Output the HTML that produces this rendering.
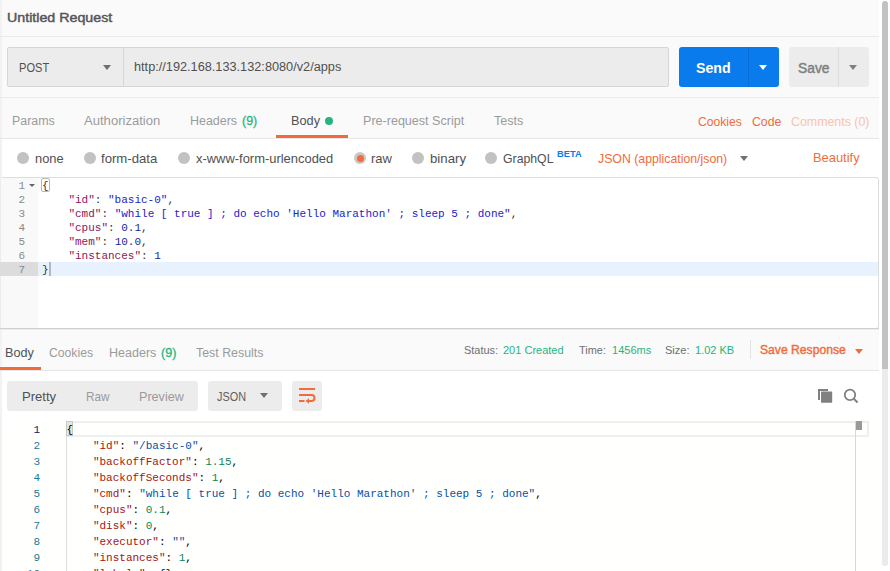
<!DOCTYPE html>
<html><head><meta charset="utf-8"><style>
html,body{margin:0;padding:0;width:890px;height:571px;overflow:hidden;background:#fff;}
#root{position:relative;width:890px;height:571px;overflow:hidden;}
#root>div,#root>svg{position:absolute;}
</style></head><body><div id="root">
<div style="left:0px;top:0px;width:879px;height:571px;background:#fafafa;"></div>
<div style="left:0px;top:0px;width:2px;height:571px;background:#f2f2f2;"></div>
<div id="t0" style="left:7.3px;top:11.00px;font:400 13.3px/13.3px 'Liberation Sans', sans-serif;color:#555555;white-space:pre;transform:scaleX(1.0701);transform-origin:0 0;-webkit-text-stroke:0.45px #555555">Untitled Request</div>
<div style="left:0px;top:36px;width:879px;height:1px;background:#ececec;"></div>
<div style="left:7px;top:47px;width:662px;height:40px;background:#ececec;box-sizing:border-box;border:1px solid #d6d6d6;border-radius:2px"></div>
<div style="left:123px;top:48px;width:1px;height:38px;background:#d6d6d6;"></div>
<div id="t1" style="left:19.3px;top:62.00px;font:400 12.5px/12.5px 'Liberation Sans', sans-serif;color:#505050;white-space:pre;transform:scaleX(0.8870);transform-origin:0 0;">POST</div>
<div style="left:103px;top:65px;width:0;height:0;border-left:4.5px solid transparent;border-right:4.5px solid transparent;border-top:5px solid #707070"></div>
<div id="t2" style="left:133.8px;top:61.00px;font:400 12.5px/12.5px 'Liberation Sans', sans-serif;color:#505050;white-space:pre;transform:scaleX(1.0179);transform-origin:0 0;">http://192.168.133.132:8080/v2/apps</div>
<div style="left:679px;top:47px;width:100px;height:40px;background:#097bed;border-radius:3px"></div>
<div style="left:748px;top:47px;width:1px;height:40px;background:#0a6fd4;"></div>
<div id="t3" style="left:695.9px;top:61.00px;font:700 14px/14px 'Liberation Sans', sans-serif;color:#ffffff;white-space:pre;transform:scaleX(1.0136);transform-origin:0 0;">Send</div>
<div style="left:758.5px;top:65px;width:0;height:0;border-left:4.5px solid transparent;border-right:4.5px solid transparent;border-top:5px solid #ffffff"></div>
<div style="left:789px;top:47px;width:80px;height:40px;background:#ececec;border-radius:3px"></div>
<div style="left:838px;top:47px;width:1px;height:40px;background:#dcdcdc;"></div>
<div id="t4" style="left:797.5px;top:62.00px;font:400 13.8px/13.8px 'Liberation Sans', sans-serif;color:#808080;white-space:pre;transform:scaleX(1.0015);transform-origin:0 0;-webkit-text-stroke:0.45px #808080">Save</div>
<div style="left:849px;top:65px;width:0;height:0;border-left:4.5px solid transparent;border-right:4.5px solid transparent;border-top:5px solid #808080"></div>
<div style="left:0px;top:97px;width:879px;height:1px;background:#ececec;"></div>
<div id="t5" style="left:12.0px;top:115.00px;font:400 12.5px/12.5px 'Liberation Sans', sans-serif;color:#9a9a9a;white-space:pre;transform:scaleX(0.9912);transform-origin:0 0;">Params</div>
<div id="t6" style="left:84.0px;top:115.00px;font:400 12.5px/12.5px 'Liberation Sans', sans-serif;color:#9a9a9a;white-space:pre;transform:scaleX(1.0457);transform-origin:0 0;">Authorization</div>
<div id="t7" style="left:190.0px;top:115.00px;font:400 12.5px/12.5px 'Liberation Sans', sans-serif;color:#9a9a9a;white-space:pre;transform:scaleX(0.9968);transform-origin:0 0;">Headers</div>
<div id="t8" style="left:241.8px;top:115.00px;font:400 12.5px/12.5px 'Liberation Sans', sans-serif;color:#26b47f;white-space:pre;transform:scaleX(0.9947);transform-origin:0 0;-webkit-text-stroke:0.3px #26b47f">(9)</div>
<div id="t9" style="left:291.1px;top:115.00px;font:400 12.5px/12.5px 'Liberation Sans', sans-serif;color:#505050;white-space:pre;transform:scaleX(1.0175);transform-origin:0 0;">Body</div>
<div style="left:325px;top:117px;width:8px;height:8px;border-radius:50%;background:#26b47f"></div>
<div id="t10" style="left:362.6px;top:115.00px;font:400 12.5px/12.5px 'Liberation Sans', sans-serif;color:#9a9a9a;white-space:pre;transform:scaleX(1.0046);transform-origin:0 0;">Pre-request Script</div>
<div id="t11" style="left:493.5px;top:115.00px;font:400 12.5px/12.5px 'Liberation Sans', sans-serif;color:#9a9a9a;white-space:pre;transform:scaleX(1.0039);transform-origin:0 0;">Tests</div>
<div style="left:276px;top:135px;width:72px;height:3px;background:#f26b3a;"></div>
<div id="t12" style="left:698.2px;top:116.00px;font:400 12.5px/12.5px 'Liberation Sans', sans-serif;color:#f26b3a;white-space:pre;transform:scaleX(0.9696);transform-origin:0 0;">Cookies</div>
<div id="t13" style="left:751.5px;top:116.00px;font:400 12.5px/12.5px 'Liberation Sans', sans-serif;color:#f26b3a;white-space:pre;transform:scaleX(0.9802);transform-origin:0 0;">Code</div>
<div id="t14" style="left:790.9px;top:116.00px;font:400 12.5px/12.5px 'Liberation Sans', sans-serif;color:#f8c3ae;white-space:pre;transform:scaleX(0.9901);transform-origin:0 0;">Comments (0)</div>
<div style="left:0px;top:138px;width:879px;height:1px;background:#e6e6e6;"></div>
<div style="left:2px;top:139px;width:877px;height:38px;background:#ffffff;"></div>
<div style="left:17px;top:152px;width:12px;height:12px;border-radius:50%;background:#c2c2c2"></div>
<div id="t15" style="left:34.9px;top:153.00px;font:400 12.7px/12.7px 'Liberation Sans', sans-serif;color:#505050;white-space:pre;transform:scaleX(1.0129);transform-origin:0 0;">none</div>
<div style="left:84px;top:152px;width:12px;height:12px;border-radius:50%;background:#c2c2c2"></div>
<div id="t16" style="left:101.4px;top:153.00px;font:400 12.7px/12.7px 'Liberation Sans', sans-serif;color:#505050;white-space:pre;transform:scaleX(1.0369);transform-origin:0 0;">form-data</div>
<div style="left:178px;top:152px;width:12px;height:12px;border-radius:50%;background:#c2c2c2"></div>
<div id="t17" style="left:195.8px;top:153.00px;font:400 12.7px/12.7px 'Liberation Sans', sans-serif;color:#505050;white-space:pre;transform:scaleX(1.0188);transform-origin:0 0;">x-www-form-urlencoded</div>
<div style="left:354px;top:152px;width:12px;height:12px;border-radius:50%;background:#c8c8c8"></div>
<div style="left:356.5px;top:154.5px;width:7px;height:7px;border-radius:50%;background:#f26b3a"></div>
<div id="t18" style="left:370.9px;top:153.00px;font:400 12.7px/12.7px 'Liberation Sans', sans-serif;color:#505050;white-space:pre;transform:scaleX(1.0267);transform-origin:0 0;">raw</div>
<div style="left:412px;top:152px;width:12px;height:12px;border-radius:50%;background:#c2c2c2"></div>
<div id="t19" style="left:429.8px;top:153.00px;font:400 12.7px/12.7px 'Liberation Sans', sans-serif;color:#505050;white-space:pre;transform:scaleX(1.0416);transform-origin:0 0;">binary</div>
<div style="left:485px;top:152px;width:12px;height:12px;border-radius:50%;background:#c2c2c2"></div>
<div id="t20" style="left:503.4px;top:153.00px;font:400 12.7px/12.7px 'Liberation Sans', sans-serif;color:#505050;white-space:pre;transform:scaleX(0.9677);transform-origin:0 0;">GraphQL</div>
<div id="t21" style="left:557.0px;top:150.00px;font:700 8.7px/8.7px 'Liberation Sans', sans-serif;color:#097bed;white-space:pre;transform:scaleX(1.0688);transform-origin:0 0;">BETA</div>
<div id="t22" style="left:597.5px;top:153.00px;font:400 12.7px/12.7px 'Liberation Sans', sans-serif;color:#f26b3a;white-space:pre;transform:scaleX(0.9694);transform-origin:0 0;">JSON (application/json)</div>
<div style="left:740px;top:156px;width:0;height:0;border-left:4.5px solid transparent;border-right:4.5px solid transparent;border-top:5px solid #707070"></div>
<div id="t23" style="left:812.9px;top:152.00px;font:400 12.7px/12.7px 'Liberation Sans', sans-serif;color:#f26b3a;white-space:pre;transform:scaleX(1.0165);transform-origin:0 0;">Beautify</div>
<div style="left:0px;top:177px;width:879px;height:152px;background:#ffffff;box-sizing:border-box;border:1px solid #dcdcdc;border-radius:3px"></div>
<div style="left:1px;top:178px;width:37px;height:150px;background:#f9f9f9;"></div>
<div style="left:0px;top:178px;width:1px;height:150px;background:#ececec;"></div>
<div style="left:0px;top:262px;width:38px;height:14px;background:#dcdcdc;"></div>
<div style="left:38px;top:262px;width:840px;height:14px;background:#e8f2fe;"></div>
<div style="left:0px;top:328px;width:879px;height:1px;background:#cfcfcf;"></div>
<div style="left:0px;top:329px;width:879px;height:1px;background:#ececec;"></div>
<div id="t24" style="left:0px;top:181.00px;font:400 11px/11px 'Liberation Mono', monospace;color:#8a8a8a;white-space:pre;width:25px;text-align:right">1</div>
<div id="t25" style="left:42px;top:181.00px;font:400 11px/11px 'Liberation Mono', monospace;color:#333333;white-space:pre;"><span style="color:#333333">{</span></div>
<div id="t26" style="left:0px;top:195.00px;font:400 11px/11px 'Liberation Mono', monospace;color:#8a8a8a;white-space:pre;width:25px;text-align:right">2</div>
<div id="t27" style="left:42px;top:195.00px;font:400 11px/11px 'Liberation Mono', monospace;color:#333333;white-space:pre;"><span style="color:#333333">    </span><span style="color:#8a165c">"id"</span><span style="color:#333333">: </span><span style="color:#2222cc">"basic-0"</span><span style="color:#333333">,</span></div>
<div id="t28" style="left:0px;top:209.00px;font:400 11px/11px 'Liberation Mono', monospace;color:#8a8a8a;white-space:pre;width:25px;text-align:right">3</div>
<div id="t29" style="left:42px;top:209.00px;font:400 11px/11px 'Liberation Mono', monospace;color:#333333;white-space:pre;"><span style="color:#333333">    </span><span style="color:#8a165c">"cmd"</span><span style="color:#333333">: </span><span style="color:#2222cc">"while [ true ] ; do echo 'Hello Marathon' ; sleep 5 ; done"</span><span style="color:#333333">,</span></div>
<div id="t30" style="left:0px;top:223.00px;font:400 11px/11px 'Liberation Mono', monospace;color:#8a8a8a;white-space:pre;width:25px;text-align:right">4</div>
<div id="t31" style="left:42px;top:223.00px;font:400 11px/11px 'Liberation Mono', monospace;color:#333333;white-space:pre;"><span style="color:#333333">    </span><span style="color:#8a165c">"cpus"</span><span style="color:#333333">: </span><span style="color:#1b1f9a">0.1</span><span style="color:#333333">,</span></div>
<div id="t32" style="left:0px;top:237.00px;font:400 11px/11px 'Liberation Mono', monospace;color:#8a8a8a;white-space:pre;width:25px;text-align:right">5</div>
<div id="t33" style="left:42px;top:237.00px;font:400 11px/11px 'Liberation Mono', monospace;color:#333333;white-space:pre;"><span style="color:#333333">    </span><span style="color:#8a165c">"mem"</span><span style="color:#333333">: </span><span style="color:#1b1f9a">10.0</span><span style="color:#333333">,</span></div>
<div id="t34" style="left:0px;top:251.00px;font:400 11px/11px 'Liberation Mono', monospace;color:#8a8a8a;white-space:pre;width:25px;text-align:right">6</div>
<div id="t35" style="left:42px;top:251.00px;font:400 11px/11px 'Liberation Mono', monospace;color:#333333;white-space:pre;"><span style="color:#333333">    </span><span style="color:#8a165c">"instances"</span><span style="color:#333333">: </span><span style="color:#1b1f9a">1</span></div>
<div id="t36" style="left:0px;top:265.00px;font:400 11px/11px 'Liberation Mono', monospace;color:#8a8a8a;white-space:pre;width:25px;text-align:right">7</div>
<div id="t37" style="left:42px;top:265.00px;font:400 11px/11px 'Liberation Mono', monospace;color:#333333;white-space:pre;"><span style="color:#333333">}</span></div>
<div style="left:29px;top:183.5px;width:0;height:0;border-left:3.0px solid transparent;border-right:3.0px solid transparent;border-top:3.5px solid #666"></div>
<div style="left:49px;top:262px;width:1.8px;height:14px;background:#b0b8c2;"></div>
<div style="left:41px;top:178px;width:9px;height:14px;background:transparent;box-sizing:border-box;border:1px solid #b8b8b8;border-radius:2px"></div>
<div id="t38" style="left:5.1px;top:347.00px;font:400 12.5px/12.5px 'Liberation Sans', sans-serif;color:#505050;white-space:pre;transform:scaleX(1.0105);transform-origin:0 0;">Body</div>
<div id="t39" style="left:49.3px;top:347.00px;font:400 12.5px/12.5px 'Liberation Sans', sans-serif;color:#9a9a9a;white-space:pre;transform:scaleX(0.9741);transform-origin:0 0;">Cookies</div>
<div id="t40" style="left:108.9px;top:347.00px;font:400 12.5px/12.5px 'Liberation Sans', sans-serif;color:#9a9a9a;white-space:pre;transform:scaleX(1.0011);transform-origin:0 0;">Headers</div>
<div id="t41" style="left:160.6px;top:347.00px;font:400 12.5px/12.5px 'Liberation Sans', sans-serif;color:#26b47f;white-space:pre;transform:scaleX(1.0078);transform-origin:0 0;-webkit-text-stroke:0.3px #26b47f">(9)</div>
<div id="t42" style="left:196.1px;top:347.00px;font:400 12.5px/12.5px 'Liberation Sans', sans-serif;color:#9a9a9a;white-space:pre;transform:scaleX(0.9898);transform-origin:0 0;">Test Results</div>
<div style="left:0px;top:367px;width:41px;height:3px;background:#f26b3a;"></div>
<div style="left:0px;top:370px;width:879px;height:1px;background:#e6e6e6;"></div>
<div id="t43" style="left:464.4px;top:345.00px;font:400 11.3px/11.3px 'Liberation Sans', sans-serif;color:#707070;white-space:pre;transform:scaleX(0.9695);transform-origin:0 0;">Status:</div>
<div id="t44" style="left:503.4px;top:345.00px;font:400 11.3px/11.3px 'Liberation Sans', sans-serif;color:#26b47f;white-space:pre;transform:scaleX(0.9745);transform-origin:0 0;">201 Created</div>
<div id="t45" style="left:579.4px;top:345.00px;font:400 11.3px/11.3px 'Liberation Sans', sans-serif;color:#707070;white-space:pre;transform:scaleX(0.9702);transform-origin:0 0;">Time:</div>
<div id="t46" style="left:611.5px;top:345.00px;font:400 11.3px/11.3px 'Liberation Sans', sans-serif;color:#26b47f;white-space:pre;transform:scaleX(0.9750);transform-origin:0 0;">1456ms</div>
<div id="t47" style="left:665.4px;top:345.00px;font:400 11.3px/11.3px 'Liberation Sans', sans-serif;color:#707070;white-space:pre;transform:scaleX(0.9751);transform-origin:0 0;">Size:</div>
<div id="t48" style="left:695.2px;top:345.00px;font:400 11.3px/11.3px 'Liberation Sans', sans-serif;color:#26b47f;white-space:pre;transform:scaleX(0.9750);transform-origin:0 0;">1.02 KB</div>
<div style="left:749.5px;top:340px;width:1px;height:19px;background:#e4e4e4;"></div>
<div id="t49" style="left:759.9px;top:344.00px;font:400 12.5px/12.5px 'Liberation Sans', sans-serif;color:#f26b3a;white-space:pre;transform:scaleX(0.9721);transform-origin:0 0;-webkit-text-stroke:0.4px #f26b3a">Save Response</div>
<div style="left:855px;top:348.5px;width:0;height:0;border-left:4.0px solid transparent;border-right:4.0px solid transparent;border-top:5px solid #f26b3a"></div>
<div style="left:2px;top:371px;width:877px;height:200px;background:#ffffff;"></div>
<div style="left:7px;top:381px;width:191px;height:30px;background:#ececec;border-radius:3px"></div>
<div id="t50" style="left:21.7px;top:391.00px;font:400 12.7px/12.7px 'Liberation Sans', sans-serif;color:#505050;white-space:pre;transform:scaleX(1.0289);transform-origin:0 0;">Pretty</div>
<div id="t51" style="left:85.5px;top:391.00px;font:400 12.7px/12.7px 'Liberation Sans', sans-serif;color:#9a9a9a;white-space:pre;transform:scaleX(0.9295);transform-origin:0 0;">Raw</div>
<div id="t52" style="left:138.5px;top:391.00px;font:400 12.7px/12.7px 'Liberation Sans', sans-serif;color:#9a9a9a;white-space:pre;transform:scaleX(0.9928);transform-origin:0 0;">Preview</div>
<div style="left:208px;top:381px;width:74px;height:30px;background:#ececec;border-radius:3px"></div>
<div id="t53" style="left:216.6px;top:391.00px;font:400 12.7px/12.7px 'Liberation Sans', sans-serif;color:#606060;white-space:pre;transform:scaleX(0.8598);transform-origin:0 0;">JSON</div>
<div style="left:260px;top:393px;width:0;height:0;border-left:4.0px solid transparent;border-right:4.0px solid transparent;border-top:5px solid #707070"></div>
<div style="left:292px;top:381px;width:30px;height:30px;background:#ececec;border-radius:3px"></div>
<svg style="left:292px;top:381px" width="30" height="30" viewBox="0 0 30 30">
<path d="M7 8h16M7 14h12.5a3 3 0 0 1 0 6H15.5M7 20h5.5" fill="none" stroke="#f26b3a" stroke-width="2"/>
<path d="M13.5 20l3.5-2.8v5.6z" fill="#f26b3a"/></svg>
<svg style="left:812px;top:384px" width="24" height="24" viewBox="0 0 24 24">
<path d="M7 16V6h9" fill="none" stroke="#808080" stroke-width="2"/>
<rect x="9" y="7.6" width="11.2" height="11.2" rx="0.8" fill="#808080"/></svg>
<svg style="left:840px;top:384px" width="24" height="24" viewBox="0 0 24 24">
<circle cx="10" cy="10.9" r="5.2" fill="none" stroke="#808080" stroke-width="1.8"/>
<path d="M13.8 14.8L17.6 18.4" stroke="#808080" stroke-width="2"/></svg>
<div style="left:7px;top:419px;width:872px;height:152px;background:#fffffe;"></div>
<div style="left:66px;top:421px;width:803px;height:16px;background:transparent;box-sizing:border-box;border:2px solid #efefef"></div>
<div style="left:66px;top:421px;width:1px;height:150px;background:#dedede;"></div>
<div style="left:855px;top:421px;width:1px;height:150px;background:#d8d8d8;"></div>
<div style="left:856px;top:421px;width:6px;height:9px;background:#9a9a9a;"></div>
<div style="left:66px;top:421px;width:7px;height:15px;background:#e6e6dc;box-sizing:border-box;border:1px solid #c8c8c8"></div>
<div id="t54" style="left:0px;top:425.00px;font:400 11px/11px 'Liberation Mono', monospace;color:#0b216f;white-space:pre;width:40px;text-align:right">1</div>
<div id="t55" style="left:66.5px;top:425.00px;font:400 11px/11px 'Liberation Mono', monospace;color:#000000;white-space:pre;"><span style="color:#000000">{</span></div>
<div id="t56" style="left:0px;top:441.00px;font:400 11px/11px 'Liberation Mono', monospace;color:#237893;white-space:pre;width:40px;text-align:right">2</div>
<div id="t57" style="left:66.5px;top:441.00px;font:400 11px/11px 'Liberation Mono', monospace;color:#000000;white-space:pre;"><span style="color:#000000">    </span><span style="color:#a31515">"id"</span><span style="color:#000000">: </span><span style="color:#0451a5">"/basic-0"</span><span style="color:#000000">,</span></div>
<div id="t58" style="left:0px;top:457.00px;font:400 11px/11px 'Liberation Mono', monospace;color:#237893;white-space:pre;width:40px;text-align:right">3</div>
<div id="t59" style="left:66.5px;top:457.00px;font:400 11px/11px 'Liberation Mono', monospace;color:#000000;white-space:pre;"><span style="color:#000000">    </span><span style="color:#a31515">"backoffFactor"</span><span style="color:#000000">: </span><span style="color:#098658">1.15</span><span style="color:#000000">,</span></div>
<div id="t60" style="left:0px;top:473.00px;font:400 11px/11px 'Liberation Mono', monospace;color:#237893;white-space:pre;width:40px;text-align:right">4</div>
<div id="t61" style="left:66.5px;top:473.00px;font:400 11px/11px 'Liberation Mono', monospace;color:#000000;white-space:pre;"><span style="color:#000000">    </span><span style="color:#a31515">"backoffSeconds"</span><span style="color:#000000">: </span><span style="color:#098658">1</span><span style="color:#000000">,</span></div>
<div id="t62" style="left:0px;top:489.00px;font:400 11px/11px 'Liberation Mono', monospace;color:#237893;white-space:pre;width:40px;text-align:right">5</div>
<div id="t63" style="left:66.5px;top:489.00px;font:400 11px/11px 'Liberation Mono', monospace;color:#000000;white-space:pre;"><span style="color:#000000">    </span><span style="color:#a31515">"cmd"</span><span style="color:#000000">: </span><span style="color:#0451a5">"while [ true ] ; do echo 'Hello Marathon' ; sleep 5 ; done"</span><span style="color:#000000">,</span></div>
<div id="t64" style="left:0px;top:505.00px;font:400 11px/11px 'Liberation Mono', monospace;color:#237893;white-space:pre;width:40px;text-align:right">6</div>
<div id="t65" style="left:66.5px;top:505.00px;font:400 11px/11px 'Liberation Mono', monospace;color:#000000;white-space:pre;"><span style="color:#000000">    </span><span style="color:#a31515">"cpus"</span><span style="color:#000000">: </span><span style="color:#098658">0.1</span><span style="color:#000000">,</span></div>
<div id="t66" style="left:0px;top:521.00px;font:400 11px/11px 'Liberation Mono', monospace;color:#237893;white-space:pre;width:40px;text-align:right">7</div>
<div id="t67" style="left:66.5px;top:521.00px;font:400 11px/11px 'Liberation Mono', monospace;color:#000000;white-space:pre;"><span style="color:#000000">    </span><span style="color:#a31515">"disk"</span><span style="color:#000000">: </span><span style="color:#098658">0</span><span style="color:#000000">,</span></div>
<div id="t68" style="left:0px;top:537.00px;font:400 11px/11px 'Liberation Mono', monospace;color:#237893;white-space:pre;width:40px;text-align:right">8</div>
<div id="t69" style="left:66.5px;top:537.00px;font:400 11px/11px 'Liberation Mono', monospace;color:#000000;white-space:pre;"><span style="color:#000000">    </span><span style="color:#a31515">"executor"</span><span style="color:#000000">: </span><span style="color:#0451a5">""</span><span style="color:#000000">,</span></div>
<div id="t70" style="left:0px;top:553.00px;font:400 11px/11px 'Liberation Mono', monospace;color:#237893;white-space:pre;width:40px;text-align:right">9</div>
<div id="t71" style="left:66.5px;top:553.00px;font:400 11px/11px 'Liberation Mono', monospace;color:#000000;white-space:pre;"><span style="color:#000000">    </span><span style="color:#a31515">"instances"</span><span style="color:#000000">: </span><span style="color:#098658">1</span><span style="color:#000000">,</span></div>
<div id="t72" style="left:0px;top:569.00px;font:400 11px/11px 'Liberation Mono', monospace;color:#237893;white-space:pre;width:40px;text-align:right">10</div>
<div id="t73" style="left:66.5px;top:569.00px;font:400 11px/11px 'Liberation Mono', monospace;color:#000000;white-space:pre;"><span style="color:#000000">    </span><span style="color:#a31515">"labels"</span><span style="color:#000000">: {},</span></div>
<div style="left:879px;top:0px;width:11px;height:571px;background:#ffffff;"></div>
<div style="left:882px;top:369px;width:6px;height:197px;background:#ebebeb;border-radius:0 0 3px 3px"></div>
<div style="left:882px;top:1px;width:6px;height:368px;background:#c2c2c2;border-radius:3px 3px 0 0"></div>
</div></body></html>
